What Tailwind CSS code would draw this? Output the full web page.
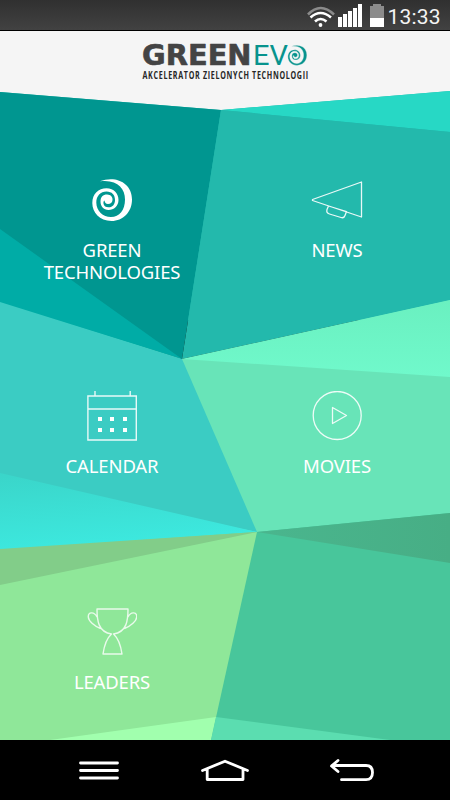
<!DOCTYPE html>
<html lang="en">
<head>
<meta charset="utf-8">
<title>GreenEvo</title>
<script src="https://cdn.jsdelivr.net/npm/@tailwindcss/browser@4"></script>
</head>
<body class="w-[450px] h-[800px] overflow-hidden bg-black font-['Noto_Sans','Open_Sans',sans-serif] flex flex-col">
<div class="h-[31px] shrink-0 border-b border-black bg-linear-to-b from-[#303030] to-[#424242] flex items-center justify-end pr-2">
  <svg class="w-[80px] h-[30px]" viewBox="303 0 80 30" fill="none">
    <path d="M305 14.500Q317.500 1.500 331 14.500" stroke="#8b8b8b" stroke-width="2.600"/>
    <path d="M307.500 17.500Q317.500 8.500 328 17.500M312 21.500Q317.500 16.500 323.500 21.500" stroke="#fff" stroke-width="2.600"/>
    <circle cx="317.500" cy="25" r="1.900" fill="#fff"/>
    <path d="M335 17h4v10h-4zM340 14h4v13h-4zM345 11h4v16h-4zM350 8h4v19h-4zM355 4h4v23h-4z" fill="#fff"/>
    <path d="M367 6h3V4h8v2h3v12h-14z" fill="#8b8b8b"/><path d="M367 18h14v9h-14z" fill="#fff"/>
  </svg>
  <svg class="w-[56px] h-[30px]" viewBox="386 0 56 30"><text x="387.500" y="23.500" font-family="Roboto,sans-serif" font-size="21" textLength="53" fill="#f4f4f4">13:33</text></svg>
</div>
<div class="relative isolate h-[709px] shrink-0 flex flex-col">
  <svg class="absolute inset-0 -z-10 w-[450px] h-[709px]" viewBox="0 31 450 709">
    <defs>
      <linearGradient id="cyan" x1="0" y1="0" x2=".3" y2="1"><stop stop-color="#3ad5c9"/><stop offset="1" stop-color="#3de9df"/></linearGradient>
      <linearGradient id="mint" x1="0" y1="0" x2="0" y2="1"><stop stop-color="#6af0c0"/><stop offset="1" stop-color="#70f9cb"/></linearGradient>
      <linearGradient id="deep" x1="0" y1="0" x2="1" y2="0"><stop stop-color="#4ab68e"/><stop offset="1" stop-color="#47ae85"/></linearGradient>
    </defs>
    <!-- base fills under the facets, so that no seam shows between them -->
    <path d="M0 31H450V320H0z" fill="#23b9ac"/>
    <path d="M0 300L182 359L450 300V560H0z" fill="#68e4b8"/>
    <path d="M0 540L257 532L450 513V740H0z" fill="#48c69b"/>
    <path d="M0 31H450V91L221 110L0 92z" fill="#f5f5f5"/>
    <path d="M0 92L221 110L182 359L0 302z" fill="#009690"/>
    <path d="M221 110L450 91V132z" fill="#27d8c5"/>
    <path d="M221 110L450 132V300L182 359z" fill="#23b9ac"/>
    <path d="M0 229L182 359L0 303z" fill="#00aca6"/>
    <path d="M0 302L182 359L257 532L0 480z" fill="#3bccc3"/>
    <path d="M182 359L450 300V377z" fill="url(#mint)"/>
    <path d="M0 585L0 549L257 532L211 740H0z" fill="#8fe799"/>
    <path d="M0 473L257 532L0 550z" fill="url(#cyan)"/>
    <path d="M0 549L257 532L0 585z" fill="#82cd89"/>
    <path d="M257 532L450 513V563z" fill="url(#deep)"/>
    <path d="M50 740L216 717L211 740z" fill="#a1ffae"/>
    <path d="M216 717L390 740H211z" fill="#5bddb0"/>
  </svg>
  <header class="h-[61px] shrink-0 flex justify-center">
    <svg class="w-[170px] h-[50px]" viewBox="140 31 170 50">
      <text x="142" y="65" font-family="DejaVu Sans,sans-serif" font-weight="bold" font-size="28" textLength="109.500" lengthAdjust="spacingAndGlyphs" fill="#444" stroke="#444" stroke-width=".6" stroke-linejoin="round">GREEN</text>
      <text x="253" y="65" font-family="Roboto,sans-serif" font-size="28.500" textLength="35" lengthAdjust="spacingAndGlyphs" fill="#07938d">EV</text>
      <path transform="translate(285.300 43.300) scale(.48)" fill="#07938d" stroke="#f5f5f5" stroke-width=".8" d="M12.700 6.300C29 0 45 8 45 24.500C45 37 36 46 24.500 46C12.500 46 5.300 37.500 5.300 28C5.300 19 11.500 13.300 19.500 13.300C27 13.300 31.500 18.500 31.500 25C31.500 31 27 35 21.500 35C16.500 35 13.500 31.200 13.500 26.500C13.500 22 16 19.500 20 19.500C24 19.500 25.800 22.500 25.500 25C25.300 27.500 23.500 29 21 29C18.800 29 17.800 27.500 17.500 25.500C15.500 26.500 16 32.300 21.500 32.300C26 32.300 28 29 28 25C28 20 25 16.500 19.500 16.500C13.500 16.500 9.300 21 9.300 27.500C9.300 36 16 42 24 42C32.500 42 38 35 38 24.500C38 13 30 4 12.700 6.300Z"/>
      <g transform="translate(142.500 79) scale(.72 1)"><text font-family="Open Sans,sans-serif" font-weight="bold" font-size="9.900" textLength="230" fill="#262626">AKCELERATOR ZIELONYCH TECHNOLOGII</text></g>
    </svg>
  </header>
  <main class="grid grid-cols-[224px_226px] auto-rows-[216px] text-white text-[18.5px] tracking-[-0.15px] leading-[22px] text-center">
    <div class="pt-[83px] flex flex-col items-center gap-3.5">
      <svg class="w-[50px] h-[50px]" viewBox="0 0 50 50"><path fill="#fff" d="M12.700 6.300C29 0 45 8 45 24.500C45 37 36 46 24.500 46C12.500 46 5.300 37.500 5.300 28C5.300 19 11.500 13.300 19.500 13.300C27 13.300 31.500 18.500 31.500 25C31.500 31 27 35 21.500 35C16.500 35 13.500 31.200 13.500 26.500C13.500 22 16 19.500 20 19.500C24 19.500 25.800 22.500 25.500 25C25.300 27.500 23.500 29 21 29C18.800 29 17.800 27.500 17.500 25.500C15.500 26.500 16 32.300 21.500 32.300C26 32.300 28 29 28 25C28 20 25 16.500 19.500 16.500C13.500 16.500 9.300 21 9.300 27.500C9.300 36 16 42 24 42C32.500 42 38 35 38 24.500C38 13 30 4 12.700 6.300Z"/></svg>
      <div><div>GREEN</div><div>TECHNOLOGIES</div></div>
    </div>
    <div class="pt-[83px] flex flex-col items-center gap-3.5">
      <svg class="w-[52px] h-[50px]" viewBox="311 175 52 50" fill="none" stroke="#fff" stroke-opacity=".9" stroke-width="1.300" stroke-linejoin="round"><path d="M312.500 199.500L361.500 182V217L312.500 200.500zM328.500 206L327 209.500Q326 213 329.500 214L341 217.500Q344 218.500 345 215.500L346.500 211.500L328.500 206"/></svg>
      <span>NEWS</span>
    </div>
    <div class="pt-[83px] flex flex-col items-center gap-3.5">
      <svg class="w-[50px] h-[50px]" viewBox="87 391 50 50" fill="none" stroke="#fff" stroke-opacity=".88" stroke-width="1.400"><path d="M87.900 396H136.300V440H87.900zM88 409H136M95 396V391M130.200 396V391"/><path d="M98 417h4v4h-4zM110 417h4v4h-4zM123 417h4v4h-4zM98 428h4v4h-4zM110 428h4v4h-4zM123 428h4v4h-4z" fill="#fff" stroke="none"/></svg>
      <span>CALENDAR</span>
    </div>
    <div class="pt-[83px] flex flex-col items-center gap-3.5">
      <svg class="w-[50px] h-[50px]" viewBox="312 391 50 50" fill="none" stroke="#fff" stroke-opacity=".88" stroke-width="1.300" stroke-linejoin="round"><circle cx="337.200" cy="415.500" r="24"/><path d="M332.500 407.500V423.500L346.500 415.500z"/></svg>
      <span>MOVIES</span>
    </div>
    <div class="pt-[83px] flex flex-col items-center gap-3.5">
      <svg class="w-[50px] h-[50px]" viewBox="87 607 50 50" fill="none" stroke="#fff" stroke-opacity=".8" stroke-width="1.400" stroke-linejoin="round"><path d="M97 609H128C128 620 127 632 113.500 634C119 639 121 647 122 654H103C104 647 106 639 111.500 634C98 632 97 620 97 609zM97 617C94 611 88 612 88.300 617C88.500 621 94 626 100.500 628.500M128 617C131 611 137 612 136.700 617C136.500 621 131 626 124.500 628.500"/></svg>
      <span>LEADERS</span>
    </div>
  </main>
</div>
<nav class="h-[60px] shrink-0 bg-black">
  <svg class="w-[450px] h-[60px]" viewBox="0 740 450 60" fill="none" stroke="#fff" stroke-width="2.800" stroke-linecap="round" stroke-linejoin="round">
    <path d="M80.500 763H117.500M80.500 770.500H117.500M80.500 778H117.500"/>
    <path d="M202.500 770.500L225 761.200L247.500 770.500M207.200 769V779.500H243V769"/>
    <path d="M332 765.500H366Q372.500 765.500 372.500 772.500T366 779.700H341.500M338 760.500L331.500 766L338 771.500"/>
  </svg>
</nav>
</body>
</html>
